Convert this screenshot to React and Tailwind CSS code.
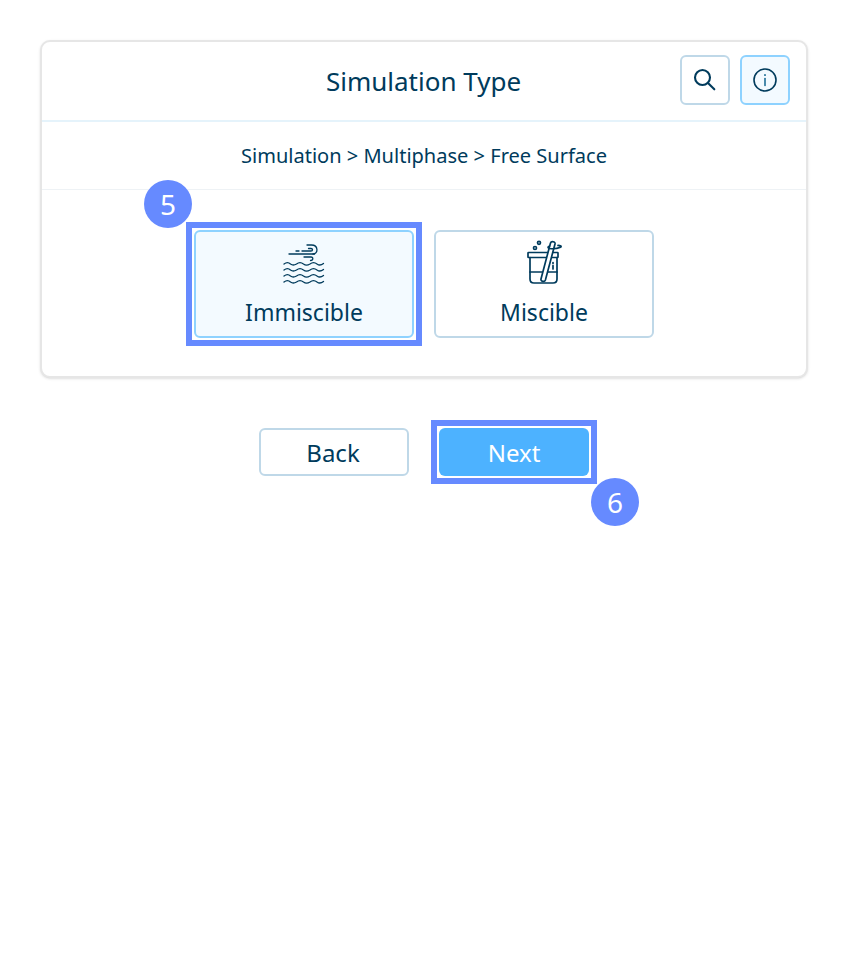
import React from 'react';

const wave = 'c2.5 -2 4.5 -2 6.5 0c2 1.5 3.5 1.5 6 0c2.5 -2 4.5 -2 7 0c2 1.5 4 1.5 6.5 0c2.5 -2 4.5 -2 7 0c2 1.5 4 1.5 6.5 -0.5';

const WavesIcon = () => (
  <svg width="42" height="42" viewBox="0 0 42 42" fill="none" stroke="#003b5c" strokeWidth="1.3" strokeLinecap="round">
    <path d="M6 11H31.5" />
    <path d="M13 8H16M19 8H28C30 8 30 5.5 28 5.5H25.5" />
    <path d="M24 2H28.5C35.5 2 35.5 11 30 11" />
    <path d="M21 14H28C30.5 14 30.5 17.5 27.5 17.5" />
    <path d={`M1 21${wave}`} />
    <path d={`M1 27${wave}`} />
    <path d={`M1 33${wave}`} />
    <path d={`M1 39${wave}`} />
  </svg>
);

const BeakerIcon = () => (
  <svg width="36" height="46" viewBox="0 0 36 46" fill="none" stroke="#003b5c" strokeWidth="1.7" strokeLinecap="round" strokeLinejoin="round">
    <rect x="2" y="12.5" width="30" height="5" rx="0.6" />
    <path d="M4 17.5V39C4 41.5 5.5 43 8 43H27C29.5 43 31 41.5 31 39V17.5" />
    <path d="M4 32H16M21 32H31" />
    <path d="M24.5 3L15 39C14.4 41.5 18.6 42.5 19.4 40L29 4C29.6 1.5 25.2 0.8 24.5 3Z" fill="#ffffff" />
    <path d="M23.5 6C21.5 6.8 21.5 8 23.5 8.5C27 9 32 8.3 34.5 7.2C36 6.4 34.5 5.4 32 5.4" />
    <circle cx="9" cy="8" r="1.5" />
    <circle cx="13" cy="2.8" r="1.5" />
    <path d="M27 22.5V23.5M27 25.5V29" />
  </svg>
);

const SearchIcon = () => (
  <svg width="26" height="26" viewBox="0 0 26 26" fill="none" stroke="#003b5c" strokeWidth="2.1" strokeLinecap="round">
    <circle cx="10.5" cy="10.5" r="7.5" />
    <path d="M16 16L22.3 22.3" />
  </svg>
);

const InfoIcon = () => (
  <svg width="26" height="26" viewBox="0 0 26 26" fill="none" strokeLinecap="round">
    <circle cx="13" cy="13" r="11" stroke="#003b5c" strokeWidth="1.6" />
    <path d="M13 11.5V18.5" stroke="#1f6f96" strokeWidth="1.6" />
    <path d="M13 7.8V8.2" stroke="#1f6f96" strokeWidth="1.8" />
  </svg>
);

const Badge = ({ n, className }) => (
  <div className={`absolute w-12 h-12 rounded-full bg-[#668aff] text-white text-[28px] flex items-center justify-center ${className}`}>
    {n}
  </div>
);

// 強調用の四角い枠
const Highlight = ({ className }) => (
  <span className={`absolute border-[6px] border-[#668aff] pointer-events-none ${className}`} />
);

export default function App() {
  return (
    <div className="min-h-[980px] bg-white pt-10 px-10 text-[#003b5c] font-['Noto_Sans',sans-serif]">
      {/* カード */}
      <div className="h-[338px] border-2 border-[#e6e6e6] rounded-[10px] shadow-sm bg-white">
        <div className="relative h-20 border-b-2 border-[#e5f3fb] flex items-center justify-center">
          <h1 className="text-[26px] leading-8 pr-px">Simulation Type</h1>
          <div className="absolute right-4 top-[13px] flex gap-2.5">
            <button className="w-[50px] h-[50px] border-2 border-[#bfd8e8] rounded-md flex items-center justify-center">
              <SearchIcon />
            </button>
            <button className="w-[50px] h-[50px] border-2 border-[#8ed2ff] bg-[#f3faff] rounded-md flex items-center justify-center">
              <InfoIcon />
            </button>
          </div>
        </div>
        <div className="h-[68px] pt-0.5 border-b border-[#eef2f5] flex items-center justify-center text-[20.05px]">
          Simulation &gt; Multiphase &gt; Free Surface
        </div>
        <div className="relative flex justify-center gap-5 pt-10">
          <Badge n="5" className="left-[102px] -top-2.5" />
          <button className="relative w-[220px] h-[108px] pt-[11px] border-2 border-[#8ed2ff] bg-[#f3faff] rounded-md flex flex-col items-center">
            <WavesIcon />
            <span className="text-[23px] leading-8 mt-[11px]">Immiscible</span>
            <Highlight className="-inset-[10px]" />
          </button>
          <button className="w-[220px] h-[108px] pt-2 border-2 border-[#bfd8e8] rounded-md flex flex-col items-center">
            <BeakerIcon />
            <span className="text-[23px] leading-8 mt-[10px]">Miscible</span>
          </button>
        </div>
      </div>

      {/* ボタン */}
      <div className="relative flex justify-center gap-[30px] mt-[50px]">
        <button className="w-[150px] h-12 pt-0.5 pr-[2px] border-2 border-[#bfd8e8] rounded-md text-2xl">Back</button>
        <button className="relative w-[150px] h-12 pt-0.5 bg-[#4db2ff] text-white rounded-md text-2xl">
          Next
          <Highlight className="-inset-2" />
        </button>
        <Badge n="6" className="left-[551px] top-[50px]" />
      </div>
    </div>
  );
}
